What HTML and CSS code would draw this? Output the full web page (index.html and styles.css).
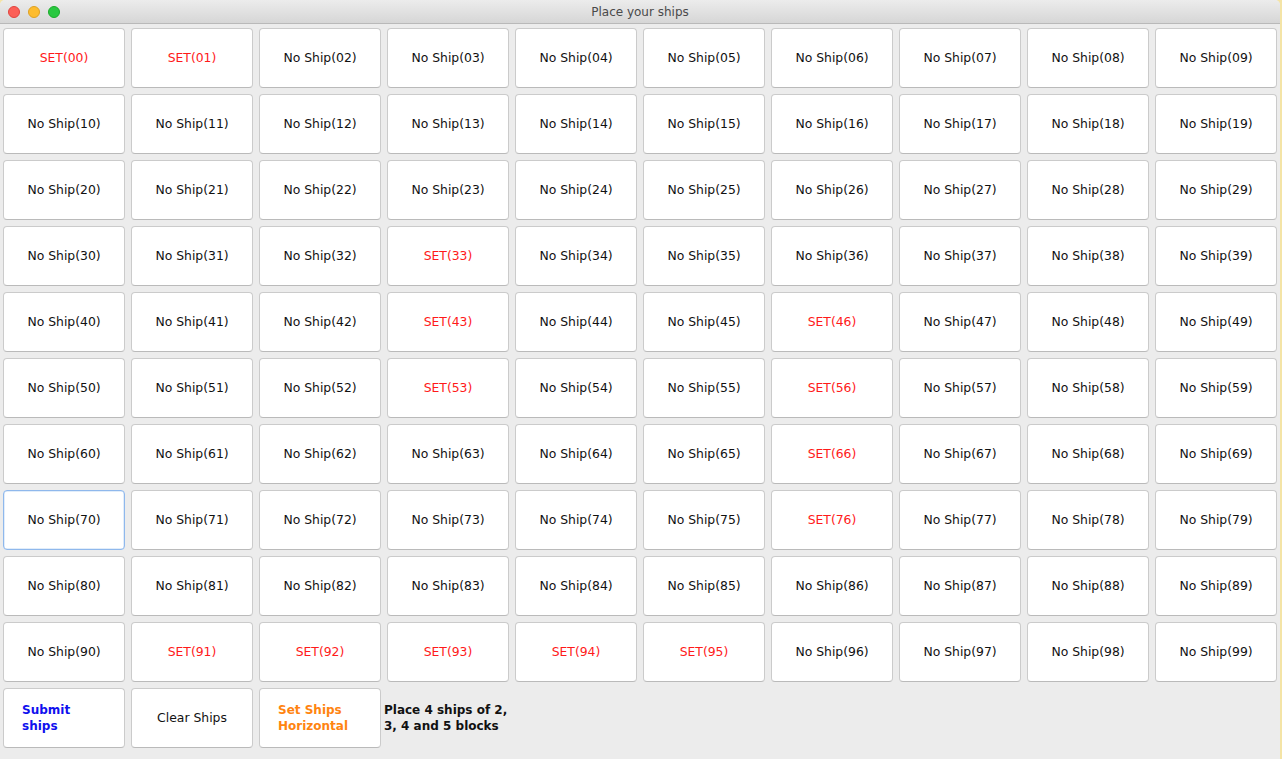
FILE: index.html
```html
<!DOCTYPE html>
<html>
<head>
<meta charset="utf-8">
<title>Place your ships</title>
<link rel="stylesheet" href="styles.css">
</head>
<body>
<div class="window">
  <div class="titlebar">
    <div class="lights">
      <span class="light red"></span>
      <span class="light yellow"></span>
      <span class="light green"></span>
    </div>
    <div class="title">Place your ships</div>
  </div>
  <div class="content">
    <div class="grid" id="grid"></div>
  </div>
</div>
<script src="script.js"></script>
</body>
</html>
```
FILE: script.js
```js
const set = new Set(["00","01","33","43","46","53","56","66","76","91","92","93","94","95"]);
const grid = document.getElementById("grid");
for (let r = 0; r < 10; r++) {
  for (let c = 0; c < 10; c++) {
    const id = "" + r + c;
    const b = document.createElement("div");
    b.className = "btn";
    if (set.has(id)) {
      b.classList.add("set");
      b.textContent = "SET(" + id + ")";
    } else {
      b.textContent = "No Ship(" + id + ")";
    }
    if (id === "70") b.classList.add("focus");
    grid.appendChild(b);
  }
}
const submit = document.createElement("div");
submit.className = "btn left submit";
submit.innerHTML = "<span>Submit<br>ships</span>";
grid.appendChild(submit);
const clear = document.createElement("div");
clear.className = "btn";
clear.textContent = "Clear Ships";
grid.appendChild(clear);
const horiz = document.createElement("div");
horiz.className = "btn left horiz";
horiz.innerHTML = "<span>Set Ships<br>Horizontal</span>";
grid.appendChild(horiz);
const label = document.createElement("div");
label.className = "label";
label.innerHTML = "Place 4 ships of 2,<br>3, 4 and 5 blocks";
grid.appendChild(label);
```
FILE: styles.css
```css
html, body {
  margin: 0;
  padding: 0;
}
body {
  background: #f4e4a6;
  width: 1282px;
  height: 759px;
  overflow: hidden;
}
.window {
  width: 1280px;
  height: 759px;
  background: #ececec;
  border-radius: 5px 5px 0 0;
  overflow: hidden;
}
.titlebar {
  height: 23px;
  border-bottom: 1px solid #b9b9b9;
  background: linear-gradient(#ececec, #d6d6d6);
  display: flex;
  align-items: center;
  justify-content: center;
  position: relative;
}
.lights {
  position: absolute;
  left: 8px;
  top: 6px;
  display: flex;
  gap: 8px;
}
.light {
  width: 12px;
  height: 12px;
  border-radius: 50%;
  box-sizing: border-box;
}
.red { background: #fc5f57; border: 1px solid #e0443e; }
.yellow { background: #fdbc2e; border: 1px solid #dea123; }
.green { background: #29c840; border: 1px solid #1aab29; }
.title {
  font-family: "DejaVu Sans", sans-serif;
  font-size: 12px;
  color: #4a4a4a;
  padding-top: 1px;
}
.content {
  padding: 4px 3px 0 3px;
}
.grid {
  display: grid;
  grid-template-columns: repeat(10, 122px);
  grid-auto-rows: 60px;
  column-gap: 6px;
  row-gap: 6px;
}
.btn {
  box-sizing: border-box;
  background: #ffffff;
  border: 1px solid #cbcbcb;
  border-bottom-color: #bababa;
  border-radius: 4px;
  display: flex;
  align-items: center;
  justify-content: center;
  padding-bottom: 2px;
  font-family: "DejaVu Sans", sans-serif;
  font-size: 12.4px;
  color: #111111;
}
.btn.set {
  color: #ff1a1a;
}
.btn.focus {
  border: 1px solid #8fb8ec;
  box-shadow: inset 0 0 0 0.5px #c4dbf5;
}
.btn.left {
  justify-content: flex-start;
  padding-left: 18px;
  padding-bottom: 0;
  font-weight: bold;
  font-size: 12px;
  line-height: 16px;
}
.submit { color: #1010ee; }
.horiz { color: #ff8410; }
.label {
  display: flex;
  align-items: center;
  margin-left: -3px;
  font-family: "DejaVu Sans", sans-serif;
  font-weight: bold;
  font-size: 12px;
  line-height: 16px;
  color: #111111;
}
```
